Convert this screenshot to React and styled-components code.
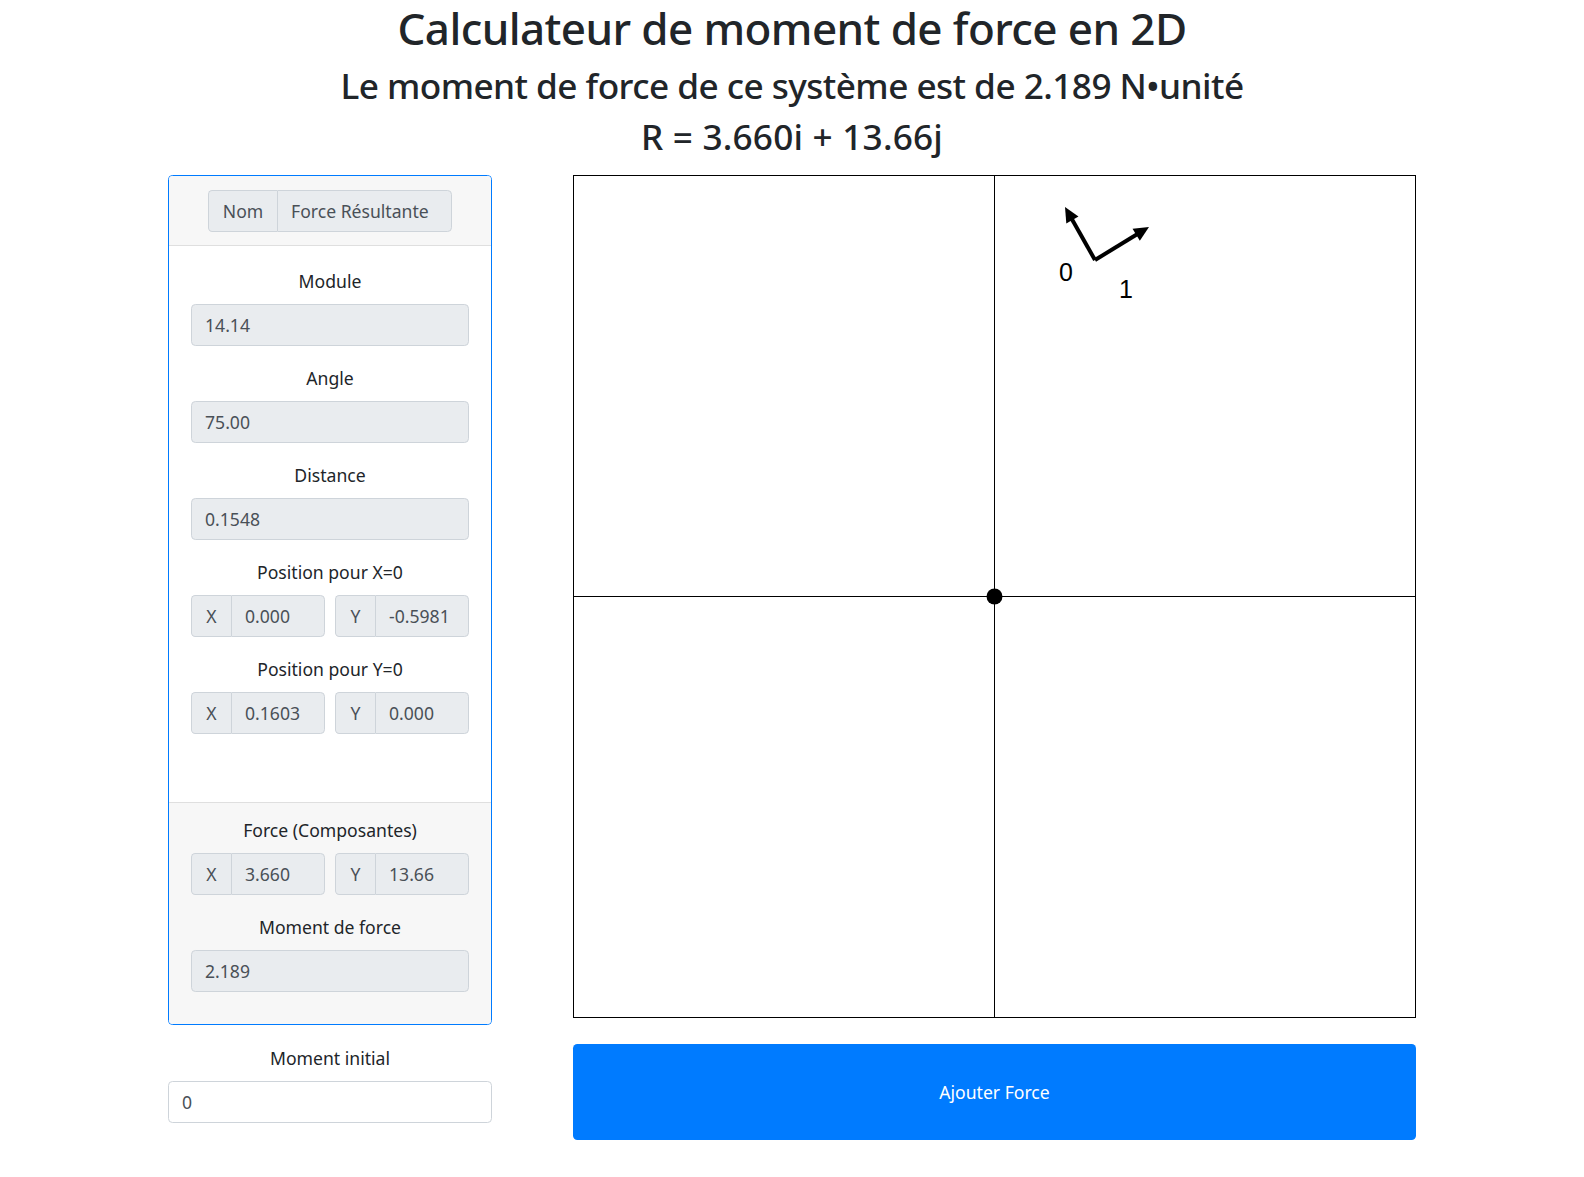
import React from 'react';
import styled, { createGlobalStyle } from 'styled-components';

const FONT = `"Noto Sans", "Open Sans", Roboto, sans-serif`;

const GlobalStyle = createGlobalStyle`
  * { box-sizing: border-box; }
  body {
    margin: 0;
    background: #fff;
    color: #212529;
    font-family: ${FONT};
    font-size: 17.6px;
    line-height: 1.5;
  }
`;

const Page = styled.div`
  display: flex;
  flex-direction: column;
  align-items: center;
  padding-top: 2px;
`;

const Title = styled.h1`
  margin: 0 0 9px;
  font-size: 44px;
  font-weight: 500;
  line-height: 1.2;
  letter-spacing: -0.6px;
  text-align: center;
`;

const Subtitle = styled.h2`
  margin: 0 0 9px;
  font-size: 35.2px;
  font-weight: 500;
  line-height: 1.2;
  letter-spacing: ${(p) => p.$spacing || '-0.55px'};
  text-align: center;
`;

const Main = styled.div`
  display: flex;
  align-items: flex-start;
  gap: 81px;
  margin-top: 9px;
`;

const LeftCol = styled.div`
  width: 324px;
  display: flex;
  flex-direction: column;
`;

const Card = styled.div`
  border: 1px solid #007bff;
  border-radius: 4.4px;
  overflow: hidden;
  display: flex;
  flex-direction: column;
`;

const CardHeader = styled.div`
  background: #f7f7f7;
  border-bottom: 1px solid #dfdfdf;
  padding: 14px 22px 13px;
  display: flex;
  justify-content: center;
`;

const CardBody = styled.div`
  padding: 22px 22px 49px;
  background: #fff;
`;

const CardFooter = styled.div`
  background: #f7f7f7;
  border-top: 1px solid #dfdfdf;
  padding: 14px 22px 32px;
`;

const Group = styled.div`
  display: flex;
  flex-direction: column;
  margin-bottom: ${(p) => (p.$last ? '0' : '19px')};
`;

const Label = styled.label`
  display: block;
  text-align: center;
  line-height: 26px;
  margin-bottom: 10px;
`;

const Field = styled.div`
  height: 42px;
  display: flex;
  align-items: center;
  padding: 0 13px;
  border: 1px solid #ced4da;
  border-radius: 4.4px;
  background: ${(p) => (p.$white ? '#fff' : '#e9ecef')};
  color: #495057;
  flex: ${(p) => (p.$joined ? '1 1 auto' : 'none')};
  min-width: 0;
  white-space: nowrap;
  overflow: hidden;
  ${(p) => p.$joined && 'border-top-left-radius: 0; border-bottom-left-radius: 0;'}
`;

const InputGroup = styled.div`
  display: flex;
  width: ${(p) => p.$width || 'auto'};
  flex: ${(p) => (p.$grow ? '1 1 0' : 'none')};
  min-width: 0;
`;

const Addon = styled.span`
  height: 42px;
  display: flex;
  align-items: center;
  justify-content: center;
  padding: 0 12px;
  border: 1px solid #ced4da;
  border-right: none;
  border-radius: 4.4px 0 0 4.4px;
  background: #e9ecef;
  color: #495057;
  flex: none;
  width: ${(p) => p.$width || 'auto'};
`;

const PairRow = styled.div`
  display: flex;
  gap: 10px;
`;

const InitialGroup = styled.div`
  margin-top: 20px;
`;

const RightCol = styled.div`
  width: 843px;
  display: flex;
  flex-direction: column;
  gap: 26px;
`;

const Board = styled.div`
  width: 843px;
  height: 843px;
  border: 1px solid #000;
  background: #fff;
  svg { display: block; }
`;

const AddButton = styled.button`
  height: 96px;
  width: 100%;
  border: none;
  border-radius: 4.4px;
  background: #007bff;
  color: #fff;
  font-family: ${FONT};
  font-size: 17.6px;
  cursor: pointer;
`;

function Pair({ label, x, y, last }) {
  return (
    <Group $last={last}>
      <Label>{label}</Label>
      <PairRow>
        <InputGroup $grow>
          <Addon $width="40px">X</Addon>
          <Field $joined>{x}</Field>
        </InputGroup>
        <InputGroup $grow>
          <Addon $width="40px">Y</Addon>
          <Field $joined>{y}</Field>
        </InputGroup>
      </PairRow>
    </Group>
  );
}

function Single({ label, value, last, white }) {
  return (
    <Group $last={last}>
      <Label>{label}</Label>
      <Field $white={white}>{value}</Field>
    </Group>
  );
}

function Arrow({ x1, y1, x2, y2 }) {
  const dx = x2 - x1;
  const dy = y2 - y1;
  const len = Math.hypot(dx, dy);
  const ux = dx / len;
  const uy = dy / len;
  const head = 15;
  const half = 7;
  const bx = x2 - ux * head;
  const by = y2 - uy * head;
  const pts = [
    [x2, y2],
    [bx - uy * half, by + ux * half],
    [bx + uy * half, by - ux * half],
  ];
  return (
    <g>
      <line x1={x1} y1={y1} x2={bx + ux * 2} y2={by + uy * 2} stroke="#000" strokeWidth="4" />
      <polygon points={pts.map((p) => p.join(',')).join(' ')} fill="#000" />
    </g>
  );
}

function Diagram() {
  const size = 841;
  const c = 420.5;
  const ox = 521;
  const oy = 84;
  return (
    <svg width={size} height={size} viewBox={`0 0 ${size} ${size}`}>
      <line x1={c} y1={0} x2={c} y2={size} stroke="#000" strokeWidth="1" />
      <line x1={0} y1={c} x2={size} y2={c} stroke="#000" strokeWidth="1" />
      <circle cx={c} cy={c} r="8" fill="#000" />
      <Arrow x1={ox} y1={oy} x2={491} y2={31} />
      <Arrow x1={ox} y1={oy} x2={575} y2={51} />
      <text x={492} y={105} fontFamily="Liberation Sans, Arial, sans-serif" fontSize="25" textAnchor="middle">0</text>
      <text x={552} y={122} fontFamily="Liberation Sans, Arial, sans-serif" fontSize="25" textAnchor="middle">1</text>
    </svg>
  );
}

export default function App() {
  return (
    <>
      <GlobalStyle />
      <Page>
        <Title>Calculateur de moment de force en 2D</Title>
        <Subtitle>Le moment de force de ce système est de 2.189 N•unité</Subtitle>
        <Subtitle $spacing="0.2px">R = 3.660i + 13.66j</Subtitle>
        <Main>
          <LeftCol>
            <Card>
              <CardHeader>
                <InputGroup $width="244px">
                  <Addon $width="69px">Nom</Addon>
                  <Field $joined>Force Résultante</Field>
                </InputGroup>
              </CardHeader>
              <CardBody>
                <Single label="Module" value="14.14" />
                <Single label="Angle" value="75.00" />
                <Single label="Distance" value="0.1548" />
                <Pair label="Position pour X=0" x="0.000" y="-0.5981" />
                <Pair label="Position pour Y=0" x="0.1603" y="0.000" />
              </CardBody>
              <CardFooter>
                <Pair label="Force (Composantes)" x="3.660" y="13.66" />
                <Single label="Moment de force" value="2.189" last />
              </CardFooter>
            </Card>
            <InitialGroup>
              <Single label="Moment initial" value="0" last white />
            </InitialGroup>
          </LeftCol>
          <RightCol>
            <Board>
              <Diagram />
            </Board>
            <AddButton>Ajouter Force</AddButton>
          </RightCol>
        </Main>
      </Page>
    </>
  );
}
